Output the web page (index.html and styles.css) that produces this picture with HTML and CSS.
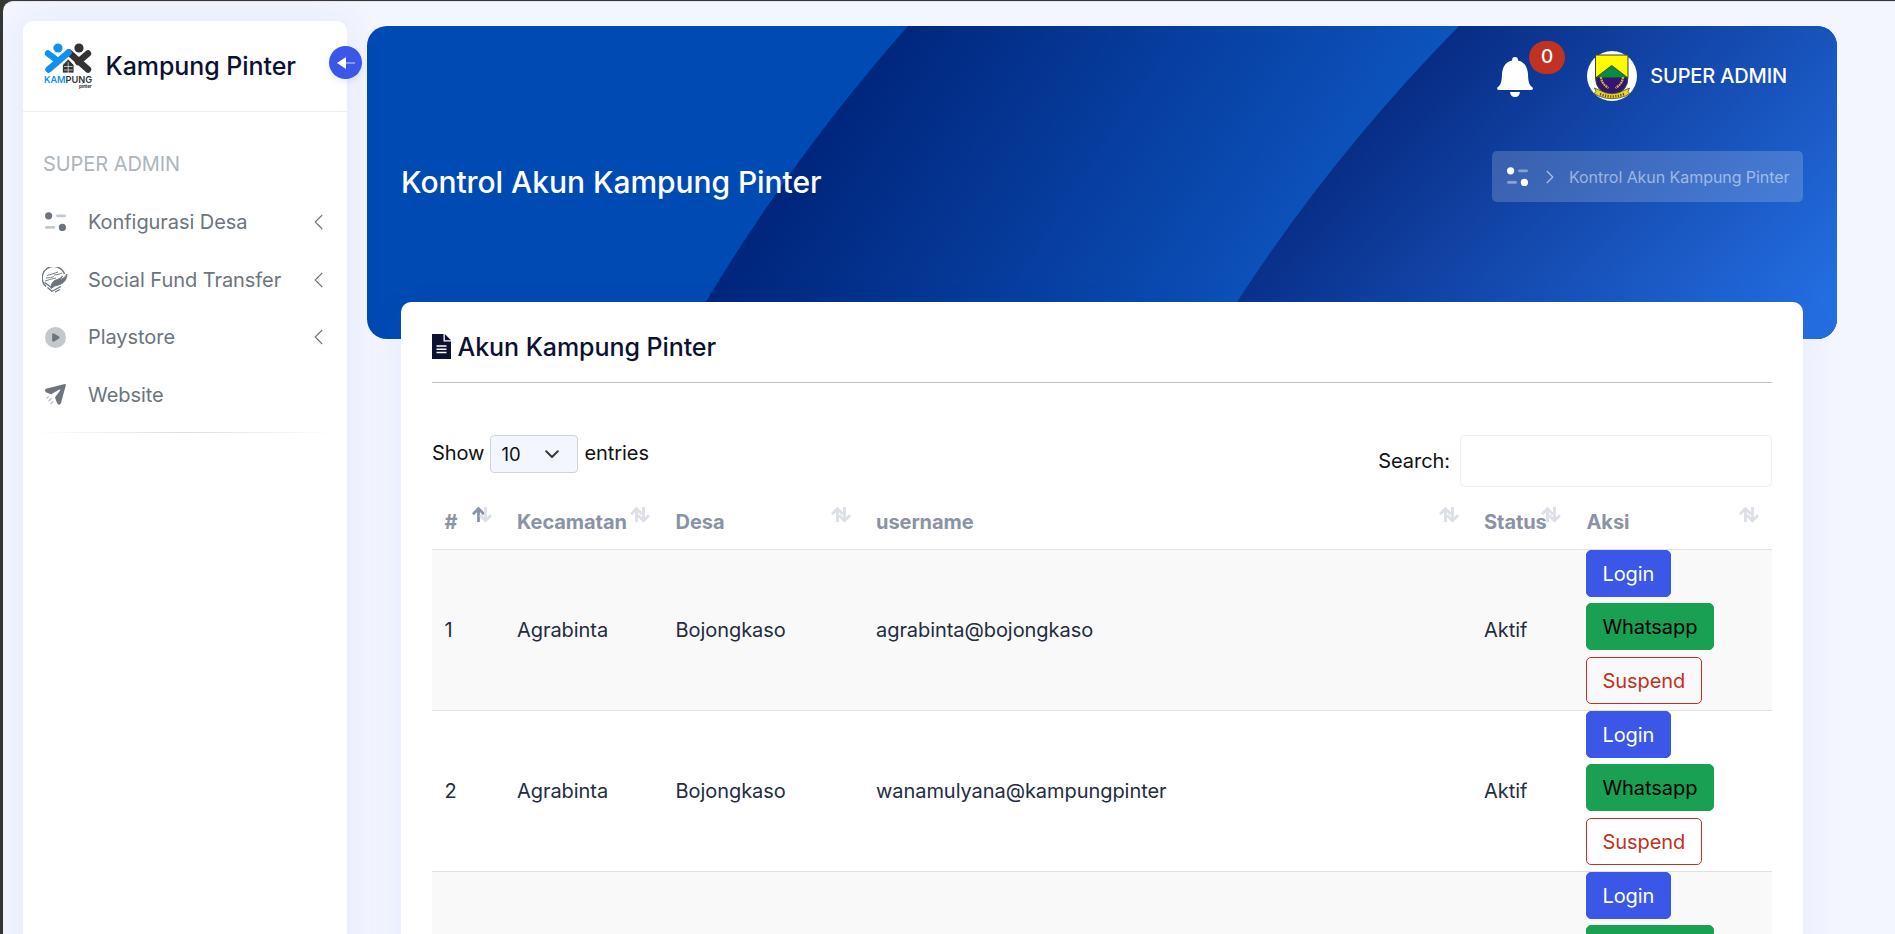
FILE: index.html
```html
<!DOCTYPE html>
<html lang="id">
<head>
<meta charset="utf-8">
<title>Kontrol Akun Kampung Pinter</title>
<link rel="stylesheet" href="styles.css">
</head>
<body>
<svg width="0" height="0" class="defs">
  <symbol id="config" viewBox="0 0 21 20">
    <circle cx="3.6" cy="3.8" r="3.6"/><circle cx="17.4" cy="15.4" r="3.6"/>
    <rect x="11" y="2.4" width="10" height="2.8" rx="1.4" opacity=".4"/><rect x="0" y="14" width="10" height="2.8" rx="1.4" opacity=".4"/>
  </symbol>
  <symbol id="sort" viewBox="0 0 20 16">
    <path d="M6.5 15V2M1 7.2L6.5 1.6L12 7.2" class="up"/>
    <path d="M13.5 0V13.2M8 8.2L13.5 13.8L19 8.2" class="down"/>
  </symbol>
  <symbol id="left" viewBox="0 0 9 16"><path d="M8.2 1L1.2 8L8.2 15" fill="none" stroke="currentColor" stroke-width="1.1"/></symbol>
</svg>
<div class="window">
  <aside class="sidebar">
    <div class="brand">
      <svg class="logo" width="50" height="48" viewBox="0 0 50 48">
        <g stroke-width="6.4" stroke-linecap="round" stroke-linejoin="round" fill="none">
          <path d="M25 9.5L44 26.5M44 10.5L34 19" stroke="#333"/>
          <path d="M4 10.5L14 18M4.500 26.500L24.500 9.500" stroke="#128ff3"/>
        </g>
        <circle cx="14" cy="5" r="4.6" fill="#128ff3"/><circle cx="35" cy="5" r="4.6" fill="#333"/>
        <path d="M18.500 30V22L24.200 16L30 22V30Z" fill="#333" stroke="#fff" stroke-width=".8"/>
        <path d="M24.200 19V30M20 23.500H28.600M20 27H28.600" stroke="#ddd" stroke-width=".8"/>
        <text x="0" y="39.8" font-size="9.6" font-weight="600" textLength="48" lengthAdjust="spacingAndGlyphs" fill="#333"><tspan fill="#128ff3">KAM</tspan>PUNG</text>
        <text x="35" y="45" font-size="5" font-weight="700" textLength="12.5" lengthAdjust="spacingAndGlyphs" fill="#333">pinter</text>
      </svg>
      <span class="brand-name">Kampung Pinter</span>
      <span class="toggle"><svg width="18" height="12" viewBox="0 0 18 12"><path d="M0 6L9 0V12Z" fill="#fff"/><path d="M9 6H18" stroke="#fff" stroke-opacity=".5" stroke-width="1.5"/></svg></span>
    </div>
    <nav>
      <div class="section">SUPER ADMIN</div>
      <div class="item"><span class="icon"><svg width="21" height="20" fill="currentColor"><use href="#config"/></svg></span><span>Konfigurasi Desa</span><svg class="chev" width="9" height="16"><use href="#left"/></svg></div>
      <div class="item"><span class="icon"><svg width="26" height="26" viewBox="0 0 26 26" fill="none" stroke="currentColor">
        <path d="M4 19.5A11.5 11.5 0 1 1 22.5 7" stroke-width="1.4"/>
        <path d="M5 8.5Q11 7 16 5M4 11Q9 11 12 9.500M3 14Q9 12 14 11M12 8Q16 8 20 6" stroke-width=".9"/>
        <path d="M9 19.500Q10 13.500 15.500 12.500Q19 11 20.500 9L18 13Q23 11 25 7Q25 14.500 18 17.500Q12 18.500 9 21.500Z" fill="currentColor" stroke-width=".9"/>
        <path d="M2.500 15.500L9.500 20.500M5.500 20.500L10 24.500M9.500 24.500L19 19.500M13 25L18 22.500" stroke-width="1.300"/>
      </svg></span><span>Social Fund Transfer</span><svg class="chev" width="9" height="16"><use href="#left"/></svg></div>
      <div class="item"><span class="icon"><svg width="21" height="21" viewBox="0 0 21 21" fill="currentColor"><circle cx="10.500" cy="10.500" r="10.500" opacity=".4"/><path d="M7.200 7.200Q7.500 5.600 9 6.400L14 9.600Q15 10.500 14 11.400L9 14.600Q7.500 15.400 7.200 13.800Z"/></svg></span><span>Playstore</span><svg class="chev" width="9" height="16"><use href="#left"/></svg></div>
      <div class="item"><span class="icon"><svg width="21" height="21" viewBox="0 0 21 21" fill="currentColor"><path d="M20.900 1Q20.900 0 19.800 .1L1 4.700Q-.6 5.700 .3 7.300Q.8 8.600 2.600 9.100L6.200 10.300L14.400 5.400Q15.700 5.400 15.100 6.400L10 13.500L12 19Q13.200 21.500 15 20.300Q15.800 19.700 16 19Z"/><path d="M3.600 12.500L1.500 14.500M6.800 14L3.500 17.200M8 17.500L5.500 20" stroke="currentColor" stroke-opacity=".45" stroke-width="1.300"/></svg></span><span>Website</span></div>
      <div class="divider"></div>
    </nav>
  </aside>
  <main class="main">
    <header class="banner">
      <svg class="waves" width="1470" height="313" viewBox="0 0 1470 313" preserveAspectRatio="none">
        <defs>
          <linearGradient id="g1" gradientUnits="userSpaceOnUse" x1="440" y1="130" x2="840" y2="390"><stop offset="0" stop-color="#00267d"/><stop offset="1" stop-color="#0d54be"/></linearGradient>
          <linearGradient id="g2" gradientUnits="userSpaceOnUse" x1="1000" y1="80" x2="1330" y2="400"><stop offset="0" stop-color="#072b83"/><stop offset="1" stop-color="#236de0"/></linearGradient>
        </defs>
        <rect width="1470" height="313" fill="#004ab3"/>
        <path d="M541 0Q425 131 332 287L320 313H1200V0Z" fill="url(#g1)"/>
        <path d="M1092 0Q966 128 870 276L850 313H1470V0Z" fill="url(#g2)"/>
      </svg>
      <div class="userbar">
        <span class="bell"><svg width="36" height="40" viewBox="0 0 36 40" fill="#fff"><path d="M18 0C20 0 21 1 21 3.500C27.500 5 30.500 10 31 17C31.200 24 32 27.500 34.500 29.500Q36.500 31 35.800 32Q35.500 33 34 33H2Q.5 33 .2 32Q-.5 31 1.500 29.500C4 27.500 4.800 24 5 17C5.500 10 8.500 5 15 3.500C15 1 16 0 18 0Z"/><path d="M13 35H23Q22.500 40 18 40Q13.500 40 13 35Z"/></svg><b class="badge">0</b></span>
        <svg class="avatar" width="50" height="50" viewBox="0 0 50 50">
          <circle cx="25" cy="25" r="25" fill="#fff"/>
          <path d="M8.500 4H41V26Q41 42 24.700 43Q8.500 42 8.500 26Z" fill="#351475" stroke="#3c4630" stroke-width="1"/>
          <path d="M9 4.500H40.500V26.500H9Z" fill="#fffb00"/>
          <path d="M9 26.500L24.700 14.500L40.500 26.500Z" fill="#078c45" stroke="#253c28" stroke-width=".8"/>
          <g fill="none" stroke="#c9b82e" stroke-width="2.200" stroke-dasharray="2 .6"><path d="M14 26Q14.500 33 21.500 37M36 26Q35.500 33 28.500 37"/></g>
          <path d="M7.500 37L12 39Q25 46.500 38 39L42.500 37L41 40.500L42.500 42.500L38.500 45Q25 50.500 11.500 45L7 42.500L9 40.500Z" fill="#e8dc20" stroke="#4a4a22" stroke-width=".8"/>
          <path d="M13 43Q25 48 37 43" fill="none" stroke="#504a20" stroke-width="2.600" stroke-dasharray="1.200 1.400"/>
        </svg>
        <span class="user">SUPER ADMIN</span>
      </div>
      <div class="title-row">
        <h1>Kontrol Akun Kampung Pinter</h1>
        <div class="crumbs"><svg width="21" height="20" fill="#fff"><use href="#config"/></svg><svg class="gt" width="8" height="14" viewBox="0 0 8 14"><path d="M.8 1L6.800 7L.8 13" fill="none" stroke="#fff" stroke-opacity=".6" stroke-width="1.200"/></svg><span>Kontrol Akun Kampung Pinter</span></div>
      </div>
    </header>
    <section class="card">
      <h2><svg width="19" height="25" viewBox="0 0 19 25"><path d="M0 0H11.500V7.500H19V25H0Z" fill="#0c1132"/><path d="M12.800 0L19 6.300H12.800Z" fill="#0c1132"/><path d="M4.500 12H14.500M4.500 15.300H14.500M4.500 18.600H14.500" stroke="#fff" stroke-width="1.500"/></svg><span>Akun Kampung Pinter</span></h2>
      <div class="tools">
        <div class="length"><span>Show</span><span class="select">10<svg width="14" height="9" viewBox="0 0 14 9"><path d="M1.200 1.200L7 7L12.800 1.200" fill="none" stroke="#343a40" stroke-width="2" stroke-linecap="round" stroke-linejoin="round"/></svg></span><span>entries</span></div>
        <label class="search"><span>Search:</span><input type="text"></label>
      </div>
      <table>
        <colgroup><col class="c1"><col class="c2"><col class="c3"><col class="c4"><col class="c5"><col class="c6"></colgroup>
        <thead><tr>
          <th>#<svg class="sort asc"><use href="#sort"/></svg></th>
          <th>Kecamatan<svg class="sort"><use href="#sort"/></svg></th>
          <th>Desa<svg class="sort"><use href="#sort"/></svg></th>
          <th>username<svg class="sort"><use href="#sort"/></svg></th>
          <th>Status<svg class="sort"><use href="#sort"/></svg></th>
          <th>Aksi<svg class="sort"><use href="#sort"/></svg></th>
        </tr></thead>
        <tbody>
          <tr><td>1</td><td>Agrabinta</td><td>Bojongkaso</td><td>agrabinta@bojongkaso</td><td>Aktif</td><td><div class="actions"><a class="btn login">Login</a><a class="btn wa">Whatsapp</a><a class="btn suspend">Suspend</a></div></td></tr>
          <tr><td>2</td><td>Agrabinta</td><td>Bojongkaso</td><td>wanamulyana@kampungpinter</td><td>Aktif</td><td><div class="actions"><a class="btn login">Login</a><a class="btn wa">Whatsapp</a><a class="btn suspend">Suspend</a></div></td></tr>
          <tr><td></td><td></td><td></td><td></td><td></td><td><div class="actions"><a class="btn login">Login</a><a class="btn wa">Whatsapp</a></div></td></tr>
        </tbody>
      </table>
    </section>
  </main>
</div>
</body>
</html>
```
FILE: styles.css
```css
* { box-sizing: border-box; }
html, body { height: 100%; overflow: hidden; }
body { margin: 0; padding: 1px 0 0 3px; background: #363636; font: 400 20px/30px Inter, "Liberation Sans", sans-serif; letter-spacing: -.06px; color: #111; }
.defs { position: absolute; }
svg { display: block; flex: none; }
.window { height: 933px; overflow: hidden; display: flex; align-items: flex-start; background: #f3f6ff; border-radius: 10px 0 0 0; padding: 19px 0 0 20px; border-top: 1px solid #e6e3ee; }

.sidebar { width: 324px; height: 980px; flex: none; background: #fff; border-radius: 10px; box-shadow: 0 0 38px rgba(70, 70, 200, .09); z-index: 2; }
.brand { position: relative; height: 91px; border-bottom: 1px solid #eceef0; display: flex; align-items: center; padding: 0 0 0 21px; }
.brand-name { margin-left: 11.500px; font-size: 25px; font-weight: 500; color: #0c1132; }
.logo { margin-top: 1px; }
.toggle { position: absolute; left: 306px; top: 25px; width: 33px; height: 33px; border-radius: 50%; background: #3a57e8; display: flex; align-items: center; justify-content: center; box-shadow: 0 3px 6px rgba(58, 87, 232, .12); }
.section { margin: 37px 0 14.400px 20px; color: #adb5bd; }
.item { height: 57.6px; padding: 0 24px 0 19px; display: flex; align-items: center; color: #6c757d; }
.icon { width: 26px; display: flex; justify-content: center; margin-right: 20px; }
.chev { margin-left: auto; }
.divider { margin: 8.600px 10px 0; height: 1px; background: linear-gradient(90deg, #fff, #dcdee0 50%, #fff); }

.main { margin-left: 20px; width: 1470px; padding-top: 5px; flex: none; }
.banner { position: relative; height: 313px; border-radius: 20px; overflow: hidden; }
.waves { position: absolute; inset: 0; }
.userbar { position: relative; height: 100px; display: flex; align-items: center; justify-content: flex-end; padding-right: 50px; color: #fff; font-weight: 500; }
.bell { position: relative; margin-right: 54px; top: .5px; }
.badge { position: absolute; left: 32px; top: -16px; width: 36px; height: 33px; border-radius: 17px; background: #c03221; font-size: 19px; font-weight: 500; line-height: 32px; text-align: center; }
.avatar { margin-right: 13px; }
.user { letter-spacing: -.14px; }
.title-row { position: relative; display: flex; justify-content: space-between; align-items: center; height: 101px; padding: 0 34px; color: #fff; }
h1 { margin: 10px 0 0; font-size: 30px; line-height: 40px; font-weight: 500; }
.crumbs { width: 311px; height: 51px; display: flex; align-items: center; padding-left: 15px; border-radius: 5px; background: rgba(255, 255, 255, .18); font-size: 16px; white-space: nowrap; color: rgba(255, 255, 255, .5); }
.gt { margin: 0 15px 0 18px; }

.card { position: relative; margin: -37px 34px 0; height: 700px; background: #fff; border-radius: 10px; padding: 0 31px; box-shadow: 0 12px 38px rgba(70, 70, 200, .08); }
h2 { display: flex; align-items: center; gap: 6.500px; height: 81px; margin: 0; padding-top: 10px; border-bottom: 1px solid #bfbfbf; font-size: 25px; font-weight: 500; color: #0c1132; }
h2 svg { margin-top: -1px; }
.tools { display: flex; justify-content: space-between; align-items: flex-start; padding-top: 52px; }
.length { display: flex; align-items: center; gap: 6px; height: 38px; }
.length > span:not(.select) { margin-top: -2px; }
.select { width: 88px; height: 38px; border: 1px solid #ced4da; border-radius: 4px; background: #f3f6ff; display: flex; align-items: center; justify-content: space-between; padding: 0 18px 0 10px; font-size: 18.500px; }
.search { display: flex; align-items: center; gap: 10px; }
.search input { width: 312px; height: 52px; border: 1px solid #eee; border-radius: 5px; }

table { width: 1340px; table-layout: fixed; border-collapse: separate; border-spacing: 0; }
.c1 { width: 72.500px; } .c2 { width: 158.500px; } .c3 { width: 200.500px; } .c4 { width: 608px; } .c5 { width: 102.500px; } .c6 { width: 198px; }
th { position: relative; height: 63px; padding: 8px 0 0 12.500px; text-align: left; font-weight: 700; color: #8a92a6; border-bottom: 1px solid #dee2e6; }
.sort { position: absolute; right: 13px; top: 20px; width: 20px; height: 16px; fill: none; stroke: #dcdfe6; stroke-width: 2.800; --up: #dcdfe6; }
.sort.asc { --up: #8a92a6; }
.up { stroke: var(--up); }
td { height: 161px; padding: 0 0 0 12.500px; color: #232d42; border-bottom: 1px solid #dee2e6; vertical-align: middle; }
tbody tr:nth-child(odd) td { background: #f9f9f9; }
.actions { height: 160px; margin-left: -.6px; display: flex; flex-direction: column; align-items: flex-start; gap: 6.300px; }
.btn { height: 47px; border: 1px solid; border-radius: 5px; padding: 8px 15.500px; line-height: 30px; }
.login { background: #3a57e8; border-color: #3a57e8; color: #fff; }
.wa { background: #1aa053; border-color: #1aa053; color: #000; }
.suspend { border-color: #c03221; color: #c03221; }
```
